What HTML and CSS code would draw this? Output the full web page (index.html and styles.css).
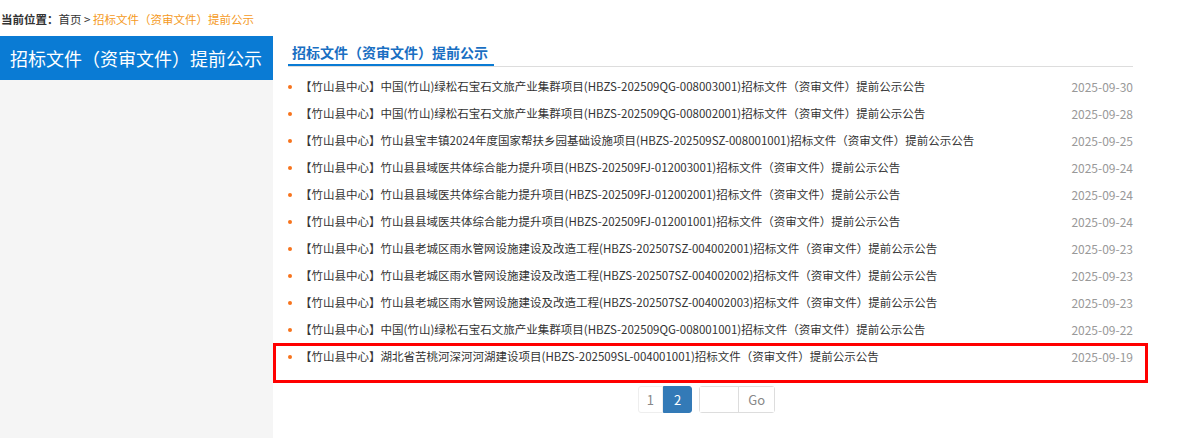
FILE: index.html
```html
<!DOCTYPE html>
<html lang="zh-CN">
<head>
    <meta charset="UTF-8">
    <meta name="viewport" content="width=device-width, initial-scale=1.0">
    <title>招标文件（资审文件）提前公示</title>
    <link rel="stylesheet" href="styles.css">
</head>
<body>

    <!-- Breadcrumb -->
    <div class="crumb">
        <b>当前位置：</b><a href="#">首页</a> &gt; <span class="crumb-current">招标文件（资审文件）提前公示</span>
    </div>

    <div class="page">
        <!-- Sidebar -->
        <aside class="side">
            <h2 class="side-title">招标文件（资审文件）提前公示</h2>
        </aside>

        <!-- Main list -->
        <div class="main">
            <div class="main-head">
                <span class="main-title">招标文件（资审文件）提前公示</span>
            </div>

            <ul class="news">
                <li><a href="#">【竹山县中心】中国(竹山)绿松石宝石文旅产业集群项目(HBZS-202509QG-008003001)招标文件（资审文件）提前公示公告</a><span class="date">2025-09-30</span></li>
                <li><a href="#">【竹山县中心】中国(竹山)绿松石宝石文旅产业集群项目(HBZS-202509QG-008002001)招标文件（资审文件）提前公示公告</a><span class="date">2025-09-28</span></li>
                <li><a href="#">【竹山县中心】竹山县宝丰镇2024年度国家帮扶乡园基础设施项目(HBZS-202509SZ-008001001)招标文件（资审文件）提前公示公告</a><span class="date">2025-09-25</span></li>
                <li><a href="#">【竹山县中心】竹山县县域医共体综合能力提升项目(HBZS-202509FJ-012003001)招标文件（资审文件）提前公示公告</a><span class="date">2025-09-24</span></li>
                <li><a href="#">【竹山县中心】竹山县县域医共体综合能力提升项目(HBZS-202509FJ-012002001)招标文件（资审文件）提前公示公告</a><span class="date">2025-09-24</span></li>
                <li><a href="#">【竹山县中心】竹山县县域医共体综合能力提升项目(HBZS-202509FJ-012001001)招标文件（资审文件）提前公示公告</a><span class="date">2025-09-24</span></li>
                <li><a href="#">【竹山县中心】竹山县老城区雨水管网设施建设及改造工程(HBZS-202507SZ-004002001)招标文件（资审文件）提前公示公告</a><span class="date">2025-09-23</span></li>
                <li><a href="#">【竹山县中心】竹山县老城区雨水管网设施建设及改造工程(HBZS-202507SZ-004002002)招标文件（资审文件）提前公示公告</a><span class="date">2025-09-23</span></li>
                <li><a href="#">【竹山县中心】竹山县老城区雨水管网设施建设及改造工程(HBZS-202507SZ-004002003)招标文件（资审文件）提前公示公告</a><span class="date">2025-09-23</span></li>
                <li><a href="#">【竹山县中心】中国(竹山)绿松石宝石文旅产业集群项目(HBZS-202509QG-008001001)招标文件（资审文件）提前公示公告</a><span class="date">2025-09-22</span></li>
                <li class="marked"><a href="#">【竹山县中心】湖北省苦桃河深河河湖建设项目(HBZS-202509SL-004001001)招标文件（资审文件）提前公示公告</a><span class="date">2025-09-19</span></li>
            </ul>

            <!-- Pager -->
            <div class="pager">
                <div class="pages">
                    <a href="#">1</a>
                    <a href="#" class="active">2</a>
                </div>
                <div class="jump">
                    <input type="text">
                    <button>Go</button>
                </div>
            </div>
        </div>
    </div>

</body>
</html>
```

FILE: styles.css
```css
body {
    font-family: "Noto Sans CJK SC", "Microsoft YaHei", sans-serif;
    font-size: 12px;
    color: #333;
    margin: 0;
    padding: 0;
}
a {
    color: #333;
    text-decoration: none;
}

/* Breadcrumb */
.crumb {
    height: 36px;
    line-height: 34px;
    padding-top: 2px;
    box-sizing: border-box;
    padding-left: 1px;
    font-size: 11.5px;
    white-space: nowrap;
}
.crumb b {
    font-weight: bold;
}
.crumb-current {
    color: #f59a23;
}

/* Layout */
.page {
    display: flex;
    min-height: 402px;
}
.side {
    width: 273px;
    flex-shrink: 0;
    background-color: #f5f5f5;
}
.side-title {
    margin: 0;
    height: 44px;
    line-height: 44px;
    background-color: #0a7bd4;
    color: #fff;
    font-size: 18px;
    font-weight: normal;
    padding-left: 10px;
    white-space: nowrap;
}
.main {
    width: 845px;
    padding: 0 15px;
}

/* Title bar */
.main-head {
    height: 30px;
    border-bottom: 1px solid #ddd;
}
.main-title {
    display: inline-block;
    height: 28px;
    line-height: 32px;
    padding: 0 6px 0 4px;
    font-size: 14px;
    font-weight: bold;
    color: #1a6fc2;
    border-bottom: 2px solid #0a7bd4;
}

/* List */
.news {
    list-style: none;
    margin: 0;
    padding: 6px 0 0;
}
.news li {
    display: flex;
    justify-content: space-between;
    height: 27px;
    line-height: 27px;
    white-space: nowrap;
}
.news li a {
    position: relative;
    padding-left: 12px;
    font-size: 11.5px;
}
.news li a::before {
    content: "";
    position: absolute;
    left: 0;
    top: 12px;
    width: 4px;
    height: 4px;
    border-radius: 50%;
    background-color: #f7731c;
}
.news .date {
    color: #999;
}
.news li.marked {
    height: auto;
    line-height: 21px;
    margin: 0 -15px;
    padding: 0 12px 13px;
    border: 3px solid #f00;
}
.news li.marked a::before {
    top: 9px;
}

/* Pager */
.pager {
    display: flex;
    justify-content: center;
    gap: 7px;
    margin-top: 3px;
    padding-right: 8px;
}
.pages {
    display: flex;
}
.pages a {
    display: block;
    height: 25px;
    line-height: 25px;
    padding: 0 8px;
    border: 1px solid #eee;
    color: #888;
    font-size: 13px;
}
.pages a:first-child {
    border-radius: 3px 0 0 3px;
}
.pages a.active {
    background-color: #337ab7;
    border-color: #337ab7;
    color: #fff;
    padding: 0 10px;
    border-radius: 0 3px 3px 0;
}
.jump {
    display: flex;
    border: 1px solid #ddd;
    border-radius: 3px;
}
.jump input {
    width: 38px;
    height: 25px;
    border: none;
    border-right: 1px solid #ddd;
    padding: 0;
    outline: none;
}
.jump button {
    width: 35px;
    height: 25px;
    border: none;
    background: #fff;
    color: #888;
    font-family: inherit;
    font-size: 13px;
    padding: 0;
}
```
